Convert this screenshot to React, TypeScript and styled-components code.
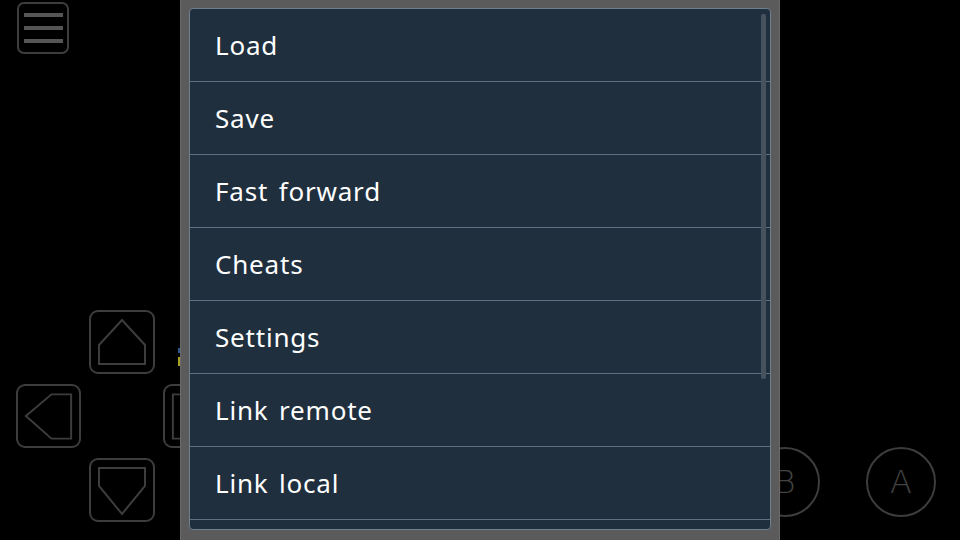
import React from 'react';
import styled, { createGlobalStyle } from 'styled-components';

const GlobalStyle = createGlobalStyle`
  html, body {
    margin: 0;
    padding: 0;
    background: #000;
  }
  body {
    font-family: "Noto Sans", "DejaVu Sans", sans-serif;
  }
`;

const Screen = styled.div`
  position: relative;
  width: 960px;
  height: 540px;
  overflow: hidden;
  background: #000;
`;

/* on-screen gamepad, drawn over the game canvas */
const MenuButton = styled.div`
  position: absolute;
  left: 17px;
  top: 2px;
  width: 52px;
  height: 52px;
  box-sizing: border-box;
  border: 2px solid #3d3d3d;
  border-radius: 7px;
  display: flex;
  flex-direction: column;
  justify-content: center;
  align-items: center;
  gap: 9px;
`;

const MenuLine = styled.div`
  width: 39px;
  height: 4px;
  background: #555;
`;

const DPad = styled.div`
  position: absolute;
  left: 16px;
  top: 310px;
  display: grid;
  grid-template-columns: 65px 66px 65px;
  grid-template-rows: 64px 64px 64px;
  column-gap: 8px;
  row-gap: 10px;
`;

const PadKey = styled.div<{ col: number; row: number }>`
  grid-column: ${p => p.col};
  grid-row: ${p => p.row};
  box-sizing: border-box;
  border: 2px solid #3d3d3d;
  border-radius: 9px;
  display: flex;
`;

const ActionRow = styled.div`
  position: absolute;
  left: 750px;
  top: 447px;
  display: flex;
  gap: 46px;
`;

const RoundButton = styled.div`
  width: 70px;
  height: 70px;
  box-sizing: border-box;
  border: 2px solid #3d3d3d;
  border-radius: 50%;
  display: flex;
  align-items: center;
  justify-content: center;
  color: #444;
  font-family: "DejaVu Sans", sans-serif;
  font-weight: 200;
  font-size: 32px;
`;

const GamePeek = styled.div`
  position: absolute;
  left: 178px;
  top: 348px;
  width: 10px;
  height: 18px;
  background: linear-gradient(#2a5a8a 0 30%, #000 30% 50%, #a8a020 50% 100%);
`;

/* dialog */
const Dialog = styled.div`
  position: absolute;
  left: 180px;
  top: 0;
  width: 600px;
  height: 540px;
  box-sizing: border-box;
  background: #5b5b5b;
  border-left: 1px solid #6a6a6a;
  border-right: 1px solid #6a6a6a;
  padding: 8px 8px 10px 8px;
  display: flex;
`;

const Panel = styled.div`
  position: relative;
  flex: 1;
  background: #1f2f3e;
  border: 1px solid #6e7f8e;
  border-radius: 4px;
  overflow: hidden;
  display: flex;
  flex-direction: column;
`;

const Item = styled.div`
  flex: 0 0 72px;
  display: flex;
  align-items: center;
  padding-left: 25px;
  border-bottom: 1px solid #5f7081;
  color: #fff;
  font-size: 26px;
  letter-spacing: 0.8px;
  word-spacing: 3px;
`;

const Scrollbar = styled.div`
  position: absolute;
  right: 4px;
  top: 5px;
  width: 5px;
  height: 365px;
  border-radius: 2px;
  background: #46525e;
`;

const items = ['Load', 'Save', 'Fast forward', 'Cheats', 'Settings', 'Link remote', 'Link local'];

const keys: { col: number; row: number; pts: string }[] = [
  { col: 2, row: 1, pts: '10,35 33,10 56,35 56,54 10,54' },
  { col: 1, row: 2, pts: '10,32 36,10 56,10 56,55 36,55' },
  { col: 3, row: 2, pts: '10,10 30,10 56,32 30,55 10,55' },
  { col: 2, row: 3, pts: '10,10 56,10 56,28 33,56 10,28' },
];

export default function App() {
  return (
    <Screen>
      <GlobalStyle />
      <MenuButton>
        <MenuLine />
        <MenuLine />
        <MenuLine />
      </MenuButton>

      <DPad>
        {keys.map(k => (
          <PadKey key={`${k.col}-${k.row}`} col={k.col} row={k.row}>
            <svg width="62" height="61" viewBox="2 2 62 61">
              <polygon points={k.pts} fill="none" stroke="#3d3d3d" strokeWidth="2" />
            </svg>
          </PadKey>
        ))}
      </DPad>

      <GamePeek />

      <ActionRow>
        <RoundButton>B</RoundButton>
        <RoundButton>A</RoundButton>
      </ActionRow>

      <Dialog>
        <Panel>
          {items.map(label => (
            <Item key={label}>{label}</Item>
          ))}
          <Scrollbar />
        </Panel>
      </Dialog>
    </Screen>
  );
}
